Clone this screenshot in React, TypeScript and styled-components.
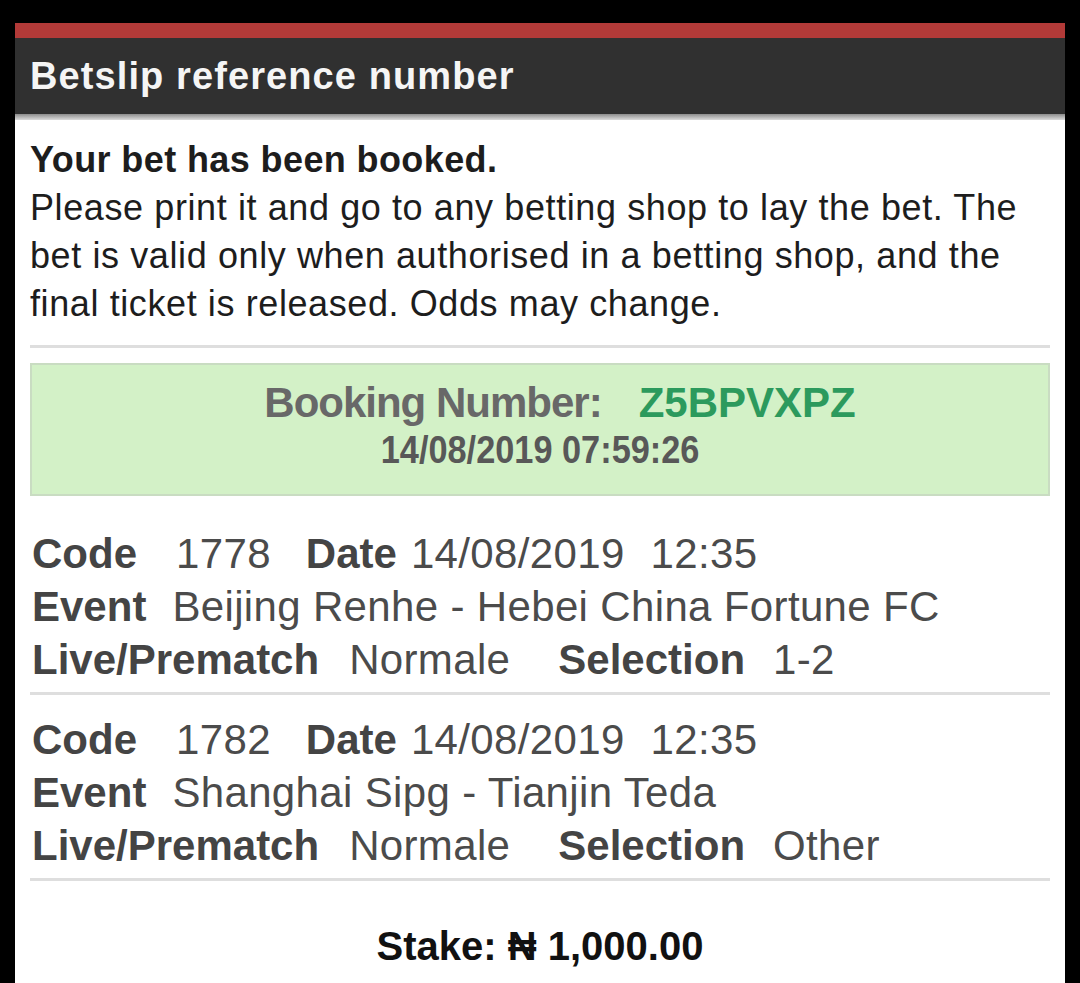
import * as React from 'react';
import styled, { createGlobalStyle } from 'styled-components';

const GlobalStyle = createGlobalStyle`
    html, body {
        margin: 0;
        padding: 0;
        background: #000;
    }
    body {
        font-family: "Liberation Sans", Arial, sans-serif;
    }
`;

const Page = styled.div`
    display: flex;
    flex-direction: column;
    height: 983px;
    padding: 23px 15px 0 15px;
    box-sizing: border-box;
    overflow: hidden;
`;

const Panel = styled.div`
    flex: 1;
    background: #fff;
    border-top: 15px solid #b23a38;
`;

const Header = styled.div`
    position: relative;
    display: flex;
    align-items: center;
    height: 76px;
    padding-left: 15px;
    background: #303030;
    color: #f5f5f5;
    font-size: 38px;
    font-weight: bold;
    letter-spacing: 1.1px;

    &::after {
        content: '';
        position: absolute;
        left: 0;
        right: 0;
        top: 100%;
        height: 6px;
        background: linear-gradient(#8c8c8c, #dcdcdc);
    }
`;

const Body = styled.div`
    padding: 22px 15px 0 15px;
`;

const Intro = styled.div`
    color: #1d1d1d;
    font-size: 36px;
    line-height: 48px;
    letter-spacing: 0.6px;
    white-space: nowrap;
`;

const IntroTitle = styled.div`
    font-weight: bold;
    letter-spacing: 0.4px;
`;

const Divider = styled.div<{ $top?: number }>`
    height: 3px;
    background: #dedede;
    margin-top: ${p => p.$top ?? 6}px;
`;

const BookingBox = styled.div`
    margin-top: 15px;
    height: 133px;
    box-sizing: border-box;
    border: 2px solid #c9dcc2;
    background: #d3f1c7;
    display: flex;
    flex-direction: column;
    align-items: center;
    padding-top: 14px;
`;

const BookingLine = styled.div`
    display: flex;
    align-items: baseline;
    padding-left: 40px;
    font-weight: bold;
    font-size: 42px;
    line-height: 48px;
`;

const BookingLabel = styled.span`
    color: #686868;
    letter-spacing: -1px;
`;

const BookingCode = styled.span`
    color: #2c9a5d;
    margin-left: 37px;
`;

const BookingDate = styled.div`
    display: inline-block;
    color: #585858;
    font-weight: bold;
    font-size: 39px;
    line-height: 46px;
    transform: scaleX(0.88);
`;

const EventBlock = styled.div<{ $top: number }>`
    padding: ${p => p.$top}px 0 0 2px;
`;

const Row = styled.div`
    display: flex;
    align-items: baseline;
    white-space: nowrap;
    font-size: 42px;
    line-height: 53px;
    color: #4b4b4b;
`;

const Label = styled.span<{ $ml?: number }>`
    font-weight: bold;
    color: #444;
    margin-left: ${p => p.$ml ?? 0}px;
`;

const Value = styled.span<{ $ml: number }>`
    margin-left: ${p => p.$ml}px;
    letter-spacing: 0.35px;
`;

const Stake = styled.div`
    margin-top: 41px;
    text-align: center;
    font-size: 40px;
    line-height: 48px;
    font-weight: bold;
    color: #111;
`;

interface IBet {
    code: string;
    date: string;
    time: string;
    event: string;
    selection: string;
}

const bets: IBet[] = [
    { code: '1778', date: '14/08/2019', time: '12:35', event: 'Beijing Renhe - Hebei China Fortune FC', selection: '1-2' },
    { code: '1782', date: '14/08/2019', time: '12:35', event: 'Shanghai Sipg - Tianjin Teda', selection: 'Other' },
];

const renderBet = (bet: IBet, index: number) => (
    <React.Fragment key={bet.code}>
        <EventBlock $top={index === 0 ? 31 : 18}>
            <Row>
                <Label>Code</Label>
                <Value $ml={39}>{bet.code}</Value>
                <Label $ml={35}>Date</Label>
                <Value $ml={14}>{bet.date}</Value>
                <Value $ml={26}>{bet.time}</Value>
            </Row>
            <Row>
                <Label>Event</Label>
                <Value $ml={26}>{bet.event}</Value>
            </Row>
            <Row>
                <Label>Live/Prematch</Label>
                <Value $ml={30}>Normale</Value>
                <Label $ml={48}>Selection</Label>
                <Value $ml={28}>{bet.selection}</Value>
            </Row>
        </EventBlock>
        <Divider />
    </React.Fragment>
);

export default function App() {
    return (
        <>
            <GlobalStyle />
            <Page>
                <Panel>
                    <Header>Betslip reference number</Header>
                    <Body>
                        <Intro>
                            <IntroTitle>Your bet has been booked.</IntroTitle>
                            Please print it and go to any betting shop to lay the bet. The<br />
                            bet is valid only when authorised in a betting shop, and the<br />
                            final ticket is released. Odds may change.
                        </Intro>
                        <Divider $top={17} />
                        <BookingBox>
                            <BookingLine>
                                <BookingLabel>Booking Number:</BookingLabel>
                                <BookingCode>Z5BPVXPZ</BookingCode>
                            </BookingLine>
                            <BookingDate>14/08/2019 07:59:26</BookingDate>
                        </BookingBox>
                        {bets.map(renderBet)}
                        <Stake>Stake: ₦ 1,000.00</Stake>
                    </Body>
                </Panel>
            </Page>
        </>
    );
}
